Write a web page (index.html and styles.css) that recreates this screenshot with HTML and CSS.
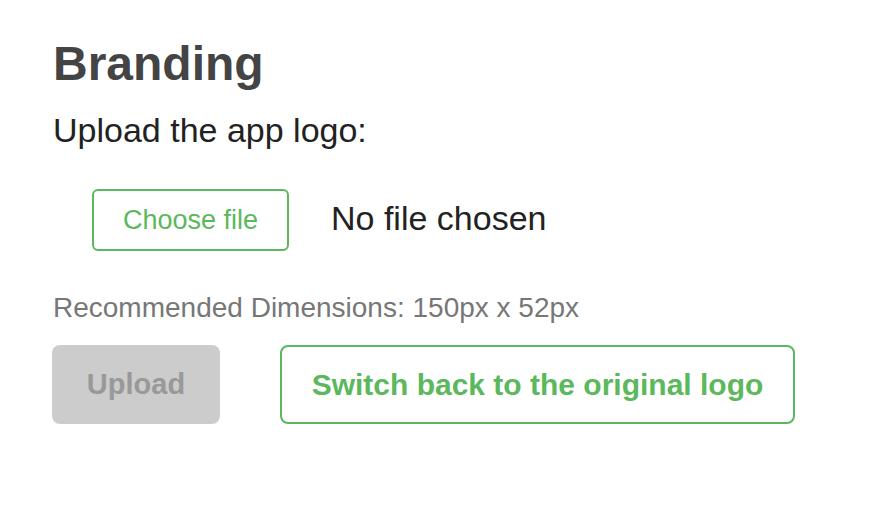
FILE: index.html
```html
<!DOCTYPE html>
<html lang="en">
<head>
<meta charset="utf-8">
<title>Branding</title>
<link rel="stylesheet" href="styles.css">
</head>
<body>
<main class="page">
  <h1 class="title">Branding</h1>
  <p class="label">Upload the app logo:</p>
  <div class="file-row">
    <span class="choose">Choose file</span>
    <span class="nofile">No file chosen</span>
  </div>
  <p class="hint">Recommended Dimensions: 150px x 52px</p>
  <div class="actions">
    <button class="btn btn-upload" disabled>Upload</button>
    <button class="btn btn-switch">Switch back to the original logo</button>
  </div>
</main>
</body>
</html>
```
FILE: styles.css
```css
html, body {
  margin: 0;
  padding: 0;
  background: #ffffff;
}

body {
  font-family: "Liberation Sans", Arial, Helvetica, sans-serif;
}

.page {
  padding: 36px 0 0 52px;
  display: flex;
  flex-direction: column;
  align-items: flex-start;
}

.title {
  margin: 0;
  font-size: 48px;
  line-height: 56px;
  font-weight: 700;
  color: #444444;
  padding-left: 1px;
}

.label {
  margin: 18px 0 0 1px;
  font-size: 34px;
  line-height: 40px;
  color: #222222;
}

.file-row {
  margin: 39px 0 0 40px;
  display: flex;
  align-items: center;
}

.choose {
  box-sizing: border-box;
  width: 197px;
  height: 62px;
  border: 2px solid #5cb85c;
  border-radius: 6px;
  color: #5cb85c;
  font-size: 27px;
  display: flex;
  align-items: center;
  justify-content: center;
}

.nofile {
  margin-left: 42px;
  font-size: 34px;
  line-height: 40px;
  color: #222222;
  padding-bottom: 4px;
}

.hint {
  margin: 40px 0 0 1px;
  font-size: 28px;
  line-height: 34px;
  color: #777777;
}

.actions {
  margin-top: 20px;
  display: flex;
  gap: 60px;
}

.btn {
  box-sizing: border-box;
  height: 79px;
  font-family: "Liberation Sans", Arial, Helvetica, sans-serif;
  font-weight: 700;
  border-radius: 8px;
  padding: 0;
  cursor: pointer;
}

.btn-upload {
  width: 168px;
  font-size: 29px;
  background: #cccccc;
  color: #999999;
  border: none;
}

.btn-switch {
  width: 515px;
  font-size: 30px;
  background: #ffffff;
  color: #5cb85c;
  border: 2px solid #5cb85c;
}
```
